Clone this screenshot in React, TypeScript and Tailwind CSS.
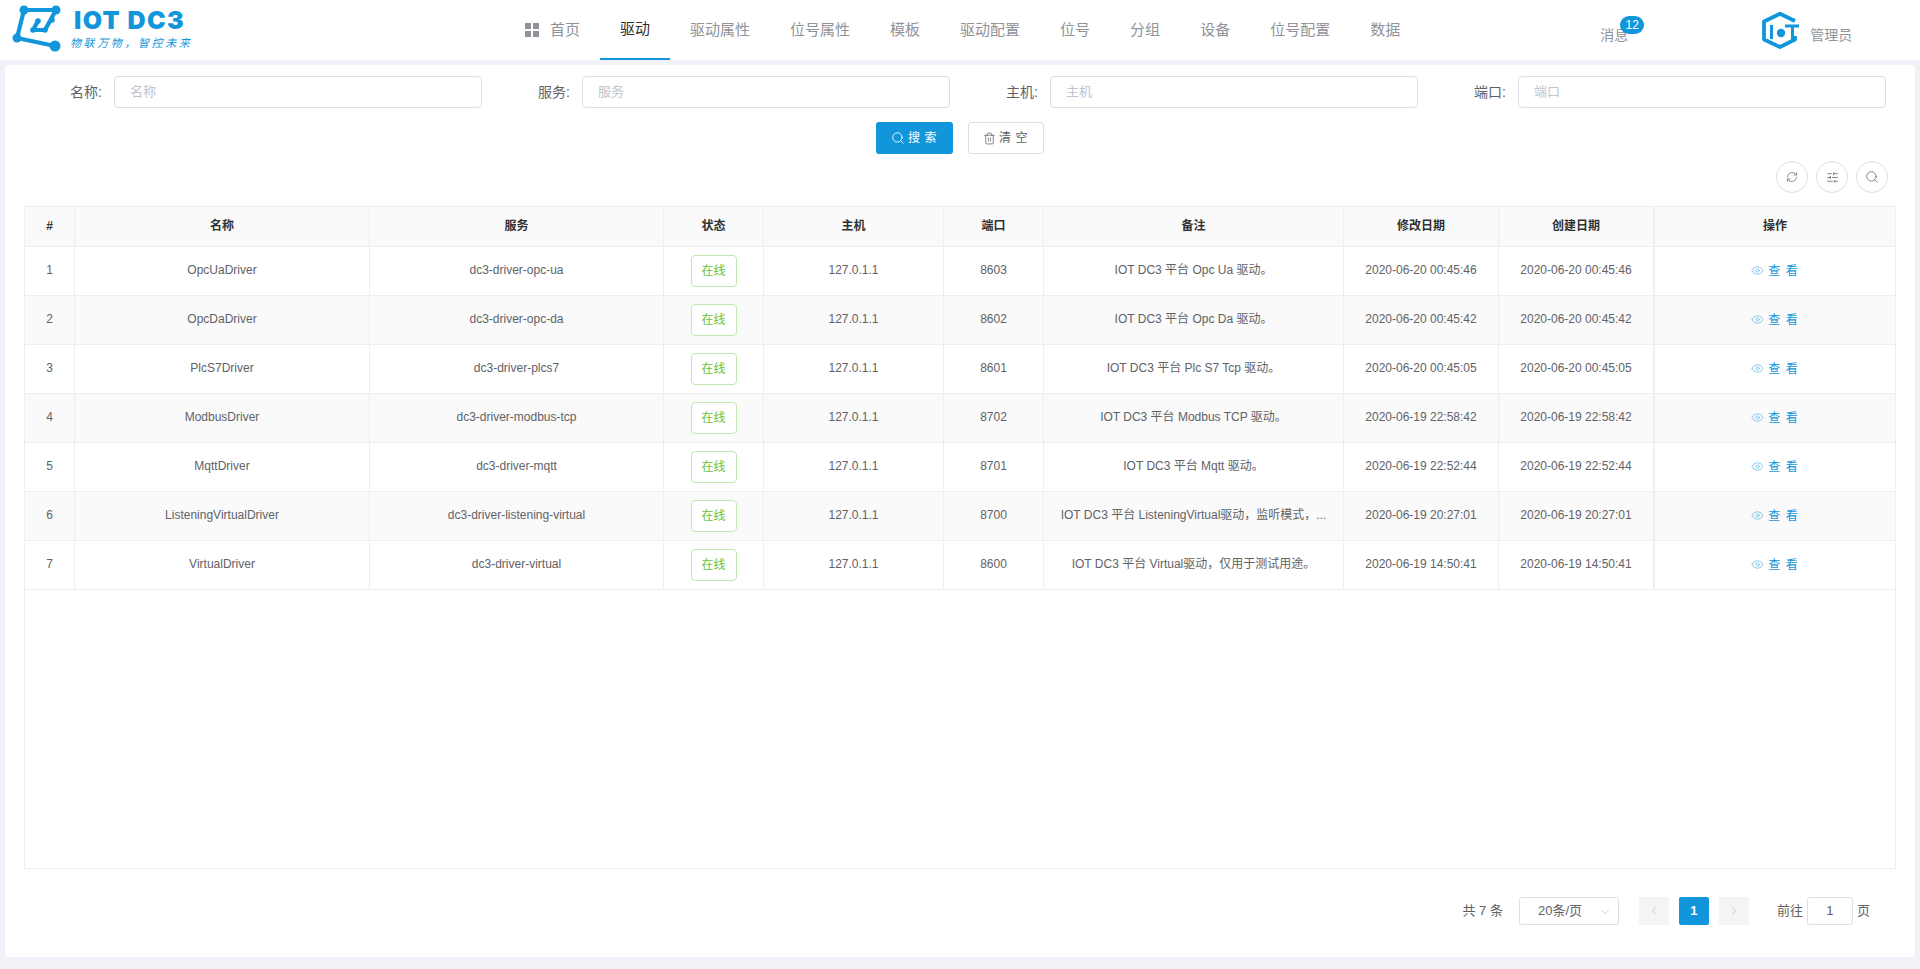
import { Eye, RefreshCw, Search, SlidersHorizontal, Trash2, ChevronDown, ChevronLeft, ChevronRight } from 'lucide-react';

const navItems = ['驱动属性', '位号属性', '模板', '驱动配置', '位号', '分组', '设备', '位号配置', '数据'];

const filters = ['名称', '服务', '主机', '端口'];

const rows = [
  ['OpcUaDriver', 'dc3-driver-opc-ua', '8603', 'IOT DC3 平台 Opc Ua 驱动。', '2020-06-20 00:45:46'],
  ['OpcDaDriver', 'dc3-driver-opc-da', '8602', 'IOT DC3 平台 Opc Da 驱动。', '2020-06-20 00:45:42'],
  ['PlcS7Driver', 'dc3-driver-plcs7', '8601', 'IOT DC3 平台 Plc S7 Tcp 驱动。', '2020-06-20 00:45:05'],
  ['ModbusDriver', 'dc3-driver-modbus-tcp', '8702', 'IOT DC3 平台 Modbus TCP 驱动。', '2020-06-19 22:58:42'],
  ['MqttDriver', 'dc3-driver-mqtt', '8701', 'IOT DC3 平台 Mqtt 驱动。', '2020-06-19 22:52:44'],
  ['ListeningVirtualDriver', 'dc3-driver-listening-virtual', '8700', 'IOT DC3 平台 ListeningVirtual驱动，监听模式，...', '2020-06-19 20:27:01'],
  ['VirtualDriver', 'dc3-driver-virtual', '8600', 'IOT DC3 平台 Virtual驱动，仅用于测试用途。', '2020-06-19 14:50:41'],
];

function Logo() {
  return (
    <div className="flex w-[505px] shrink-0">
      <svg width="60" height="60" viewBox="0 0 60 60" className="ml-[10px] shrink-0 text-[#1296db]">
        <g fill="none" stroke="currentColor" strokeWidth="4.2" strokeLinecap="round" strokeLinejoin="round">
          <path d="M14 10 H46 L35 30 H23 L28 21" />
          <path d="M14 10 L7 38 L45 46" />
        </g>
        <g fill="currentColor">
          <circle cx="14" cy="10" r="4.5" />
          <circle cx="46" cy="10" r="4.5" />
          <circle cx="7" cy="38" r="4.5" />
          <circle cx="45" cy="46" r="5.5" />
          <circle cx="28" cy="21" r="2.8" />
          <circle cx="23" cy="30" r="2.8" />
          <circle cx="35" cy="30" r="2.8" />
          <circle cx="42" cy="20" r="2.8" />
        </g>
      </svg>
      <div className="ml-[4px] text-[#1296db]">
        <div className="mt-[5px] font-['Inter',sans-serif] text-[25px] leading-[30px] font-black tracking-[1.4px] whitespace-nowrap">IOT DC3</div>
        <div className="-ml-[4px] mt-[1px] text-[11px] leading-[14px] italic tracking-[2.6px] whitespace-nowrap">物联万物，智控未来</div>
      </div>
    </div>
  );
}

function AdminLogo() {
  return (
    <svg width="37" height="37" viewBox="0 0 37 37" className="text-[#1296db]">
      <path d="M33 9 L18 1.8 L2 9.5 V27.5 L18 35 L33 27.5 V24" fill="none" stroke="currentColor" strokeWidth="3.8" strokeLinejoin="round" />
      <path d="M9.5 13 V27" stroke="currentColor" strokeWidth="3" />
      <circle cx="19" cy="21" r="4.2" fill="currentColor" />
      <path d="M23 14 H37 M30.5 14 V27" stroke="currentColor" strokeWidth="3" fill="none" />
    </svg>
  );
}

function Header() {
  return (
    <header className="flex h-[60px] items-stretch bg-white">
      <Logo />
      <nav className="flex text-[15px] text-[#909399]">
        <a className="flex h-[60px] items-center px-5">
          <span className="mr-[11px] grid h-[14px] w-[14px] grid-cols-2 gap-[2px]">
            <i className="bg-[#909399]" />
            <i className="bg-[#909399]" />
            <i className="bg-[#909399]" />
            <i className="bg-[#909399]" />
          </span>
          首页
        </a>
        <a className="flex h-[60px] items-center border-b-2 border-[#1296db] px-5 text-[#303133]">驱动</a>
        {navItems.map((item) => (
          <a key={item} className="flex h-[60px] items-center px-5">
            {item}
          </a>
        ))}
      </nav>
      <div className="relative ml-[180px] mt-[25px] h-[20px] text-sm leading-[20px] text-[#909399]">
        消息
        <span className="absolute left-[20px] top-[-9px] h-[18px] w-[24px] rounded-[10px] bg-[#1296db] text-center text-xs leading-[18px] text-white">12</span>
      </div>
      <div className="ml-[134px] mt-[12px]">
        <AdminLogo />
      </div>
      <div className="ml-[11px] mt-[25px] text-sm leading-[20px] text-[#909399]">管理员</div>
    </header>
  );
}

function Filters() {
  return (
    <div className="grid grid-cols-4 pl-[9px] pr-[29px] pt-[11px]">
      {filters.map((label) => (
        <div key={label} className="flex items-center">
          <label className="w-[100px] shrink-0 pr-[12px] pb-[1px] text-right text-sm text-[#606266]">{label}:</label>
          <div className="flex h-[32px] flex-1 items-center rounded-[4px] border border-[#dcdfe6] bg-white pb-[1px] pl-[15px] text-[13px] text-[#c0c4cc]">{label}</div>
        </div>
      ))}
    </div>
  );
}

function Buttons() {
  return (
    <div className="mt-[14px] flex justify-center gap-[15px] pr-[3px] pl-[2px] text-xs">
      <button className="flex h-[32px] w-[77px] items-center justify-center gap-[3px] rounded-[3px] bg-[#1296db] text-white">
        <Search size={14} strokeWidth={1.5} />
        <span className="tracking-[0.5px]">搜 索</span>
      </button>
      <button className="flex h-[32px] w-[76px] items-center justify-center gap-[3px] rounded-[3px] border border-[#dcdfe6] bg-white text-[#606266]">
        <Trash2 size={13} strokeWidth={1.4} />
        <span className="tracking-[0.5px]">清 空</span>
      </button>
    </div>
  );
}

function Toolbar() {
  const cls = 'flex h-[32px] w-[32px] items-center justify-center rounded-full border border-[#dcdfe6] bg-white text-[#606266]';
  return (
    <div className="mt-[7px] flex justify-end gap-2 pr-[27px]">
      <span className={cls}><RefreshCw size={12} strokeWidth={1.4} /></span>
      <span className={cls}><SlidersHorizontal size={13} strokeWidth={1.4} /></span>
      <span className={cls}><Search size={14} strokeWidth={1.3} /></span>
    </div>
  );
}

function DriverTable() {
  const th = 'h-[40px] border-r border-b border-[#ebeef5] bg-[#fafafa] pb-[2px] text-center text-xs font-bold text-[#303133]';
  const cell = 'h-[49px] border-r border-b border-[#ebeef5] text-center text-xs whitespace-nowrap overflow-hidden';
  const td = `${cell} pb-[2px]`;
  return (
    <div className="mx-[19px] mt-[13px] h-[663px] border border-[#ebeef5]">
      <table className="w-full table-fixed border-separate border-spacing-0 text-[#606266]">
        <thead>
          <tr>
            <th className={`${th} w-[50px]`}>#</th>
            <th className={`${th} w-[295px]`}>名称</th>
            <th className={`${th} w-[294px]`}>服务</th>
            <th className={`${th} w-[100px]`}>状态</th>
            <th className={`${th} w-[180px]`}>主机</th>
            <th className={`${th} w-[100px]`}>端口</th>
            <th className={`${th} w-[300px]`}>备注</th>
            <th className={`${th} w-[155px]`}>修改日期</th>
            <th className={`${th} w-[156px] border-r-2`}>创建日期</th>
            <th className={`${th} border-r-0`}>操作</th>
          </tr>
        </thead>
        <tbody>
          {rows.map((row, i) => (
            <tr key={row[0]} className={i % 2 === 1 ? 'bg-[#fafafa]' : 'bg-white'}>
              <td className={td}>{i + 1}</td>
              <td className={td}>{row[0]}</td>
              <td className={td}>{row[1]}</td>
              <td className={cell}>
                <span className="inline-block h-[32px] w-[46px] rounded-[4px] border border-[#c2e7b0] bg-white text-xs leading-[30px] text-[#67c23a]">在线</span>
              </td>
              <td className={td}>127.0.1.1</td>
              <td className={td}>{row[2]}</td>
              <td className={td}>{row[3]}</td>
              <td className={td}>{row[4]}</td>
              <td className={`${td} border-r-2`}>{row[4]}</td>
              <td className={`${td} border-r-0`}>
                <span className="inline-flex items-center gap-[4px] pt-[4px] tracking-[1px] text-[#1296db]">
                  <Eye size={13} strokeWidth={1.3} className="text-[#5cb6e6]" />
                  查 看
                </span>
              </td>
            </tr>
          ))}
        </tbody>
      </table>
    </div>
  );
}

function Pagination() {
  return (
    <div className="mt-[28px] flex h-[28px] items-center justify-end pr-[45px] text-[13px] text-[#606266]">
      <span className="mr-[16px]">共 7 条</span>
      <div className="relative mr-[20px] flex h-[28px] w-[100px] items-center rounded-[3px] border border-[#dcdfe6] pl-[18px]">
        20条/页
        <ChevronDown size={14} strokeWidth={1.3} className="absolute right-[6px] top-[7px] text-[#c0c4cc]" />
      </div>
      <span className="flex h-[28px] w-[30px] items-center justify-center rounded-[2px] bg-[#f4f4f5] text-[#c0c4cc]">
        <ChevronLeft size={14} strokeWidth={1.5} />
      </span>
      <span className="mx-[10px] flex h-[28px] w-[30px] items-center justify-center rounded-[2px] bg-[#1296db] font-bold text-white">1</span>
      <span className="flex h-[28px] w-[30px] items-center justify-center rounded-[2px] bg-[#f4f4f5] text-[#c0c4cc]">
        <ChevronRight size={14} strokeWidth={1.5} />
      </span>
      <span className="ml-[28px]">前往</span>
      <span className="mx-[4px] flex h-[28px] w-[46px] items-center justify-center rounded-[3px] border border-[#dcdfe6]">1</span>
      <span>页</span>
    </div>
  );
}

export default function App() {
  return (
    <div className="flex h-[969px] flex-col overflow-hidden bg-[#f0f2f7] font-['Liberation_Sans','Noto_Sans_CJK_SC',sans-serif]">
      <Header />
      <main className="mt-[5px] ml-[5px] mr-[5px] h-[892px] rounded-[4px] bg-white">
        <Filters />
        <Buttons />
        <Toolbar />
        <DriverTable />
        <Pagination />
      </main>
    </div>
  );
}
